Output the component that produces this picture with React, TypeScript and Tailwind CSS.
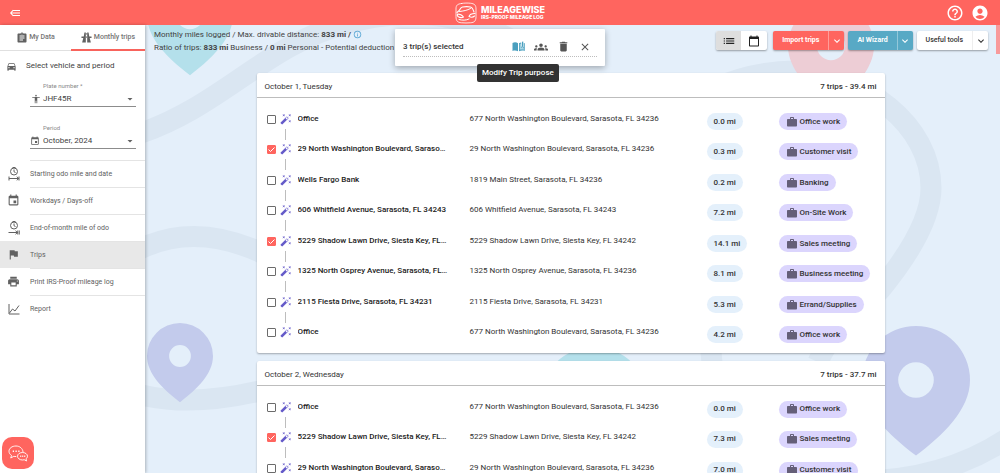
import React, { useState } from 'react';
import {
  MdAccessibility,
  MdAccountCircle,
  MdArrowDropDown,
  MdAssignment,
  MdAutoFixHigh,
  MdCalendarToday,
  MdClose,
  MdDelete,
  MdDirectionsCar,
  MdEvent,
  MdFlag,
  MdGroups,
  MdHelpOutline,
  MdInfoOutline,
  MdKeyboardArrowDown,
  MdList,
  MdPrint,
  MdWork,
} from 'react-icons/md';

interface Trip {
  id: string;
  name: string;
  address: string;
  miles: string;
  purpose: string;
}

interface Day {
  title: string;
  summary: string;
  trips: Trip[];
}

const days: Day[] = [
  {
    title: 'October 1, Tuesday',
    summary: '7 trips - 39.4 mi',
    trips: [
      { id: 'a1', name: 'Office', address: '677 North Washington Boulevard, Sarasota, FL 34236', miles: '0.0 mi', purpose: 'Office work' },
      { id: 'a2', name: '29 North Washington Boulevard, Sarasota, FL 34236', address: '29 North Washington Boulevard, Sarasota, FL 34236', miles: '0.3 mi', purpose: 'Customer visit' },
      { id: 'a3', name: 'Wells Fargo Bank', address: '1819 Main Street, Sarasota, FL 34236', miles: '0.2 mi', purpose: 'Banking' },
      { id: 'a4', name: '606 Whitfield Avenue, Sarasota, FL 34243', address: '606 Whitfield Avenue, Sarasota, FL 34243', miles: '7.2 mi', purpose: 'On-Site Work' },
      { id: 'a5', name: '5229 Shadow Lawn Drive, Siesta Key, FL 34242', address: '5229 Shadow Lawn Drive, Siesta Key, FL 34242', miles: '14.1 mi', purpose: 'Sales meeting' },
      { id: 'a6', name: '1325 North Osprey Avenue, Sarasota, FL 34236', address: '1325 North Osprey Avenue, Sarasota, FL 34236', miles: '8.1 mi', purpose: 'Business meeting' },
      { id: 'a7', name: '2115 Fiesta Drive, Sarasota, FL 34231', address: '2115 Fiesta Drive, Sarasota, FL 34231', miles: '5.3 mi', purpose: 'Errand/Supplies' },
      { id: 'a8', name: 'Office', address: '677 North Washington Boulevard, Sarasota, FL 34236', miles: '4.2 mi', purpose: 'Office work' },
    ],
  },
  {
    title: 'October 2, Wednesday',
    summary: '7 trips - 37.7 mi',
    trips: [
      { id: 'b1', name: 'Office', address: '677 North Washington Boulevard, Sarasota, FL 34236', miles: '0.0 mi', purpose: 'Office work' },
      { id: 'b2', name: '5229 Shadow Lawn Drive, Siesta Key, FL 34242', address: '5229 Shadow Lawn Drive, Siesta Key, FL 34242', miles: '7.3 mi', purpose: 'Sales meeting' },
      { id: 'b3', name: '29 North Washington Boulevard, Sarasota, FL 34236', address: '29 North Washington Boulevard, Sarasota, FL 34236', miles: '7.0 mi', purpose: 'Customer visit' },
    ],
  },
];

/* ---------- Icons that the Material set does not have ---------- */

const MenuBackIcon = () => (
  <svg viewBox="0 0 24 18" className="w-[10px] h-2" fill="none" stroke="currentColor" strokeWidth="2.6">
    <path d="M8 3h16M3 9h21M8 15h16M8 2 1.5 9 8 16" />
  </svg>
);

const RoadIcon = () => (
  <svg viewBox="0 0 24 24" className="w-[11px] h-[11px]" fill="currentColor">
    <path d="M7.500 1h3v22H2.500L5 13H1v-3h5zM16.500 1h-3v22h8L19 13h4v-3h-5z" />
    <path d="M11.300 2h1.400v4h-1.400zM11.300 9h1.400v4h-1.400z" />
  </svg>
);

const OdoIcon = ({ end }: { end?: boolean }) => (
  <svg viewBox="0 0 24 28" className="w-3 h-[14px]" fill="none" stroke="currentColor" strokeWidth="2">
    <circle cx="12" cy="9" r="7" />
    <path d="M12 5v4.5l3 1.5M9 1h6" />
    {end
      ? <path d="M1 23h18M15 19.500l4 3.500-4 3.500M22.500 19v8M19.500 19v8" />
      : <path d="M2 19v8M22 19v8M2 23h19M17.500 19.500l4 3.500-4 3.500" />}
  </svg>
);

const ChartIcon = () => (
  <svg viewBox="0 0 24 24" className="w-3 h-3" fill="none" stroke="currentColor" strokeWidth="2">
    <path d="M2 2v20h21M3 20l6-8 5 4 8-11" />
  </svg>
);

const BookIcon = () => (
  <svg viewBox="0 0 26 24" className="w-[13px] h-3">
    <path d="M1 4c4-2 8-1.500 11 .5v16c-3-1.500-7-2-11-.5z" fill="#4a9fbe" />
    <path d="M14 4.500c1.500-1 3-1.500 4.500-1.500v9l2.500-2 2.500 2V4l2 .5V20c-4-1.500-8-1-11.500.5z" fill="#4a9fbe" />
    <path d="M20 1.500 22.500 1v8.500l-2.500 2z" fill="#4a9fbe" />
    <path d="M15.500 17.500V6c.8-.5 1.600-.8 2.300-.9v9l2.700-2 3 1.500v4c-2.800-.6-5.500-.5-8 -.1z" fill="#a9d5e4" />
  </svg>
);

const ChatIcon = () => (
  <svg viewBox="0 0 40 34" className="w-5 h-[17px]" fill="none" stroke="white" strokeWidth="1.800" strokeLinejoin="round">
    <path d="M16 2C8 2 2 6.500 2 12.500c0 3.500 2 6.500 5 8.300L5.500 26l6-3.300c1.500.3 3 .4 5 .3" />
    <path d="M30 14C29.500 7 23.500 2 16 2" />
    <path d="M29 15c-5.500 0-10 3.300-10 7.500s4.500 7.500 10 7.500c1.300 0 2.500-.2 3.500-.5L37 32l-1-4.500c1.800-1.300 3-3 3-5 0-4.200-4.500-7.500-10-7.500z" />
    <path d="M9.500 12.500h2.500M15 12.500h2.500M20.500 12.500H23M24.500 22.500h2M28.500 22.500h2M32.500 22.500h2" strokeWidth="2.600" />
  </svg>
);

const LogoIcon = () => (
  <svg viewBox="0 0 44 44" className="w-[22px] h-[22px]" fill="none" stroke="white" strokeLinecap="round" strokeLinejoin="round">
    <path d="M13 3C5 4 2 6 2 14v15c0 9 3 12 11 12.500 6 .6 12 .6 18 0 8-.5 11-3.500 11-12.500V14c0-8-3-10.500-11-11.500-6-.6-12-.6-18 .5z" strokeWidth="1.600" />
    <path d="M4 21c3-2 5-4 7-8 1-2 2-2.500 4-3 6-1 11-1 16 0 3 .7 5 4 7 10" strokeWidth="2.200" />
    <path d="M9 19c8-1 15-2 22-6" strokeWidth="2" />
    <path d="M5 24c5 0 9 2 12 6-4 2-8 1-11-1-1.500-1.500-2-3-1-5zM40 23c-6 0-11 2-12 6 4 2 9 1 11-1" strokeWidth="2.200" />
    <path d="M8 35c7 2 14 2 20-1" strokeWidth="2" />
  </svg>
);

/* ---------- Map backdrop ---------- */

const PIN = 'M-1 0A1 1 0 0 1 1 0C1 .55 .5 1.02 0 1.4C-.5 1.02-1 .55-1 0ZM-.33 0A.33 .33 0 0 0 .33 0A.33 .33 0 0 0-.33 0Z';

const MapBackdrop = () => (
  <svg
    viewBox="145 25 855 448"
    preserveAspectRatio="xMidYMin slice"
    className="absolute inset-0 w-full h-full"
    aria-hidden="true"
  >
    <g fill="none" stroke="#dae6f2" strokeWidth="21">
      <path d="M135 135C220 108 265 45 345 24C400 8 465 10 520 45" />
      <path d="M138 250Q195 221 264 254" />
      <path d="M138 394Q190 408 264 390" />
      <path d="M715 88Q755 71 795 71C865 75 931 125 931 188C931 222 903 262 880 290C850 320 832 330 818 362" />
      <path d="M710 340L713 375" />
      <path d="M860 481Q945 480 1008 438" />
    </g>
    <g fillRule="evenodd">
      <path d={PIN} transform="translate(190 15) scale(43)" fill="#b4e0eb" />
      <path d={PIN} transform="translate(831 46) scale(43)" fill="#edcdd5" />
      <path d={PIN} transform="translate(594 401) scale(54)" fill="#b4e0eb" />
      <path d={PIN} transform="translate(180 356) scale(33)" fill="#c3cbec" />
      <path d={PIN} transform="translate(916 380) scale(54)" fill="#c3cbec" />
    </g>
  </svg>
);

/* ---------- Sidebar ---------- */

const menu = [
  { label: 'Starting odo mile and date', icon: <OdoIcon /> },
  { label: 'Workdays / Days-off', icon: <MdEvent size={13} /> },
  { label: 'End-of-month mile of odo', icon: <OdoIcon end /> },
  { label: 'Trips', icon: <MdFlag size={13} />, active: true },
  { label: 'Print IRS-Proof mileage log', icon: <MdPrint size={13} /> },
  { label: 'Report', icon: <ChartIcon /> },
];

interface FieldProps {
  id: string;
  label: string;
  value: string;
  icon: React.ReactNode;
}

const Field: React.FC<FieldProps> = ({ id, label, value, icon }) => (
  <div className="ml-[30px] mr-[9px] border-b border-[#8c8c8c]">
    <label htmlFor={id} className="block pl-[13px] text-[6px] leading-[10px] text-[#8a8a8a]">{label}</label>
    <div className="flex items-center h-[15px] text-[#616161]">
      <span className="w-[13px] shrink-0">{icon}</span>
      <select id={id} className="flex-1 min-w-0 appearance-none bg-transparent text-[8px] leading-3 text-[#424242] outline-none">
        <option>{value}</option>
      </select>
      <MdArrowDropDown size={12} />
    </div>
  </div>
);

const Sidebar = () => (
  <aside className="relative z-10 w-[145px] shrink-0 bg-white text-[#616161] shadow-[1px_0_3px_rgba(0,0,0,0.25)]">
    <div className="flex h-[26px] border-b border-[#e0e0e0] text-[7px] font-medium text-[#757575]">
      <button className="flex items-center justify-center gap-px w-[71px]">
        <MdAssignment size={12} className="text-[#616161]" />My Data
      </button>
      <button className="flex items-center justify-center gap-[2px] flex-1 border-b-2 border-[#f8635c] -mb-px">
        <span className="text-[#616161]"><RoadIcon /></span>Monthly trips
      </button>
    </div>
    <div className="flex items-center gap-[9px] h-[30px] pl-[6px] text-[8px] text-[#424242]">
      <MdDirectionsCar size={11} className="text-[#616161]" />
      <h2>Select vehicle and period</h2>
    </div>
    <Field id="plate" label="Plate number *" value="JHF45R" icon={<MdAccessibility size={10} className="ml-px" />} />
    <div className="h-4" />
    <Field id="period" label="Period" value="October, 2024" icon={<MdEvent size={10} />} />
    <nav className="mt-[11px]">
      {menu.map(item => (
        <a
          key={item.label}
          href="#"
          className={item.active ? 'flex items-stretch h-[27px] bg-[#e8e8e8]' : 'flex items-stretch h-[27px]'}
        >
          <span className="flex items-center justify-center w-[27px] mr-[3px]">{item.icon}</span>
          <span className="flex items-center flex-1 border-t border-[#e4e4e4] text-[7px]">{item.label}</span>
        </a>
      ))}
    </nav>
  </aside>
);

/* ---------- Toolbar ---------- */

interface SplitButtonProps {
  label: string;
  className: string;
  divider: string;
}

const SplitButton: React.FC<SplitButtonProps> = ({ label, className, divider }) => (
  <div className={`flex h-[19px] rounded-[2px] text-[7px] shadow-[0_1px_2px_rgba(0,0,0,0.35)] ${className}`}>
    <button className="px-[9px]">{label}</button>
    <button aria-label={`${label} options`} className={`flex items-center justify-center w-4 border-l ${divider}`}>
      <MdKeyboardArrowDown size={12} />
    </button>
  </div>
);

const Toolbar = () => (
  <div className="relative flex justify-between h-12 pl-[9px] pr-3">
    <div className="pt-[3px] text-[8px] leading-[13px] text-[#424242] whitespace-nowrap">
      <p className="flex items-center gap-[2px]">
        <span>Monthly miles logged / Max. drivable distance: <b>833 mi /</b></span>
        <MdInfoOutline size={9} className="text-[#4a9fd0]" />
      </p>
      <p>Ratio of trips: <b>833 mi</b> Business / <b>0 mi</b> Personal - Potential deduction</p>
    </div>
    <div className="flex items-start gap-1 pt-[6px]">
      <div className="flex h-[19px] mr-[2px] bg-white rounded-[2px] text-[#222] shadow-[0_1px_2px_rgba(0,0,0,0.35)]">
        <button aria-label="List view" className="flex items-center justify-center w-[25px] bg-[#dedede] rounded-l-[2px]">
          <MdList size={14} />
        </button>
        <button aria-label="Calendar view" className="flex items-center justify-center w-[26px]">
          <MdCalendarToday size={12} />
        </button>
      </div>
      <SplitButton label="Import trips" className="bg-[#ff655f] font-bold text-white" divider="border-[#ff9d99]" />
      <SplitButton label="AI Wizard" className="bg-[#58a9c5] font-bold text-white" divider="border-[#93c8da]" />
      <SplitButton label="Useful tools" className="bg-white font-medium text-[#333]" divider="border-[#eee]" />
    </div>
  </div>
);

/* ---------- Trip list ---------- */

interface DayCardProps {
  day: Day;
  selected: string[];
  onToggle: (id: string) => void;
}

const DayCard: React.FC<DayCardProps> = ({ day, selected, onToggle }) => (
  <section className="pb-2 bg-white rounded-[2px] shadow-[0_1px_2px_rgba(0,0,0,0.3)]">
    <header className="flex items-center justify-between h-[25px] px-2 pt-1 border-b border-[#bdbdbd] text-[8px] text-[#333]">
      <h3>{day.title}</h3>
      <span className="font-medium">{day.summary}</span>
    </header>
    <table className="w-full mt-[15px] table-fixed text-[8px] leading-3 text-[#333]">
      <colgroup>
        <col className="w-[23px]" />
        <col className="w-[18px]" />
        <col className="w-[172px]" />
        <col />
        <col className="w-[72px]" />
        <col className="w-[106px]" />
      </colgroup>
      <tbody>
        {day.trips.map((trip, i) => (
          <tr key={trip.id} className="not-last:odd:h-[30px] not-last:even:h-[31px] align-top">
            <td className="pl-[10px] pt-[2px]">
              <label className="relative block size-[9px]">
                <input
                  type="checkbox"
                  aria-label={`Select ${trip.name}`}
                  checked={selected.includes(trip.id)}
                  onChange={() => onToggle(trip.id)}
                  className="peer block size-[9px] appearance-none border border-[#6b6b6b] rounded-[1px] checked:border-[#ff655f] checked:bg-[#ff655f]"
                />
                <svg viewBox="0 0 9 9" className="absolute inset-0 hidden peer-checked:block pointer-events-none" fill="none" stroke="white">
                  <path d="M1.500 4.500l2 2 4-4" />
                </svg>
              </label>
            </td>
            <td>
              <MdAutoFixHigh size={12} className="text-[#655bc9]" />
              {i < day.trips.length - 1 && <div className="w-px h-[11px] mt-1 ml-[5px] bg-[#bdbdbd]" />}
            </td>
            <td className="pr-[22px]">
              <div className="truncate font-medium text-[#212121]">{trip.name}</div>
            </td>
            <td>{trip.address}</td>
            <td>
              <span className="inline-flex items-center h-[17px] px-[7px] rounded-full bg-[#e4f0fb] font-medium">{trip.miles}</span>
            </td>
            <td>
              <span className="inline-flex items-center gap-[2px] h-[17px] px-[7px] rounded-full bg-[#dbd5fd] font-medium whitespace-nowrap">
                <MdWork size={12} className="text-[#655f78]" />
                {trip.purpose}
              </span>
            </td>
          </tr>
        ))}
      </tbody>
    </table>
  </section>
);

const SelectionBar = ({ count, onClear }: { count: number; onClear: () => void }) => (
  <div className="absolute z-20 top-[29px] left-1/2 -translate-x-1/2 w-[210px] px-2 pt-2 pb-[9px] bg-white rounded-[1px] shadow-[0_2px_6px_rgba(0,0,0,0.3)]">
    <div className="flex items-center justify-between h-5 border-b border-dotted border-[#bdbdbd] text-[8px] font-medium text-[#333]">
      <span>{count} trip(s) selected</span>
      <div className="flex items-center gap-[9px] pr-[6px] text-[#555]">
        <button aria-label="Modify Trip purpose" className="relative">
          <BookIcon />
        </button>
        <button aria-label="Modify passengers"><MdGroups size={14} /></button>
        <button aria-label="Delete"><MdDelete size={13} /></button>
        <button aria-label="Close" onClick={onClear}><MdClose size={12} /></button>
      </div>
    </div>
    <div role="tooltip" className="absolute top-[35px] left-[82px] px-[5px] leading-[18px] rounded-[2px] bg-[#323232] text-[8px] font-medium text-white whitespace-nowrap">
      Modify Trip purpose
    </div>
  </div>
);

const App: React.FC = () => {
  const [selected, setSelected] = useState<string[]>(['a2', 'a5', 'b2']);

  const toggle = (id: string) => {
    setSelected(selected.includes(id) ? selected.filter(s => s !== id) : [...selected, id]);
  };

  return (
    <div className="relative flex flex-col h-screen overflow-hidden bg-[#e4effa] font-[Roboto,sans-serif]">
      <header className="grid grid-cols-3 items-center h-[25px] shrink-0 px-[10px] bg-[#ff655f] text-white">
        <button aria-label="Collapse menu" className="justify-self-start"><MenuBackIcon /></button>
        <a href="#" className="flex items-center gap-1 justify-self-center font-[Inter,sans-serif] font-extrabold whitespace-nowrap">
          <LogoIcon />
          <span>
            <span className="block text-[9px] leading-[9px]">MILEAGEWISE</span>
            <span className="block text-[5px] leading-[7px]">IRS-PROOF MILEAGE LOG</span>
          </span>
        </a>
        <div className="flex gap-[7px] pr-px justify-self-end">
          <button aria-label="Help"><MdHelpOutline size={18} /></button>
          <button aria-label="Account"><MdAccountCircle size={18} /></button>
        </div>
      </header>

      <div className="flex flex-1 min-h-0">
        <Sidebar />
        <main className="relative flex-1 min-w-0 overflow-hidden">
          <MapBackdrop />
          <Toolbar />
          <div className="relative pr-1">
            <div className="flex flex-col gap-2 max-w-[628px] mx-auto">
              {days.map(day => (
                <DayCard key={day.title} day={day} selected={selected} onToggle={toggle} />
              ))}
            </div>
          </div>
          {/* Scroll thumb */}
          <div className="absolute top-0 right-0 w-1 h-[29px] bg-[#f89a9b]" />
        </main>
      </div>

      {selected.length > 0 && <SelectionBar count={selected.length} onClear={() => setSelected([])} />}

      <button
        aria-label="Open chat"
        className="absolute z-20 left-[2px] bottom-1 flex items-center justify-center size-8 rounded-[10px] bg-[#ff655f]"
      >
        <ChatIcon />
      </button>
    </div>
  );
};

export default App;
